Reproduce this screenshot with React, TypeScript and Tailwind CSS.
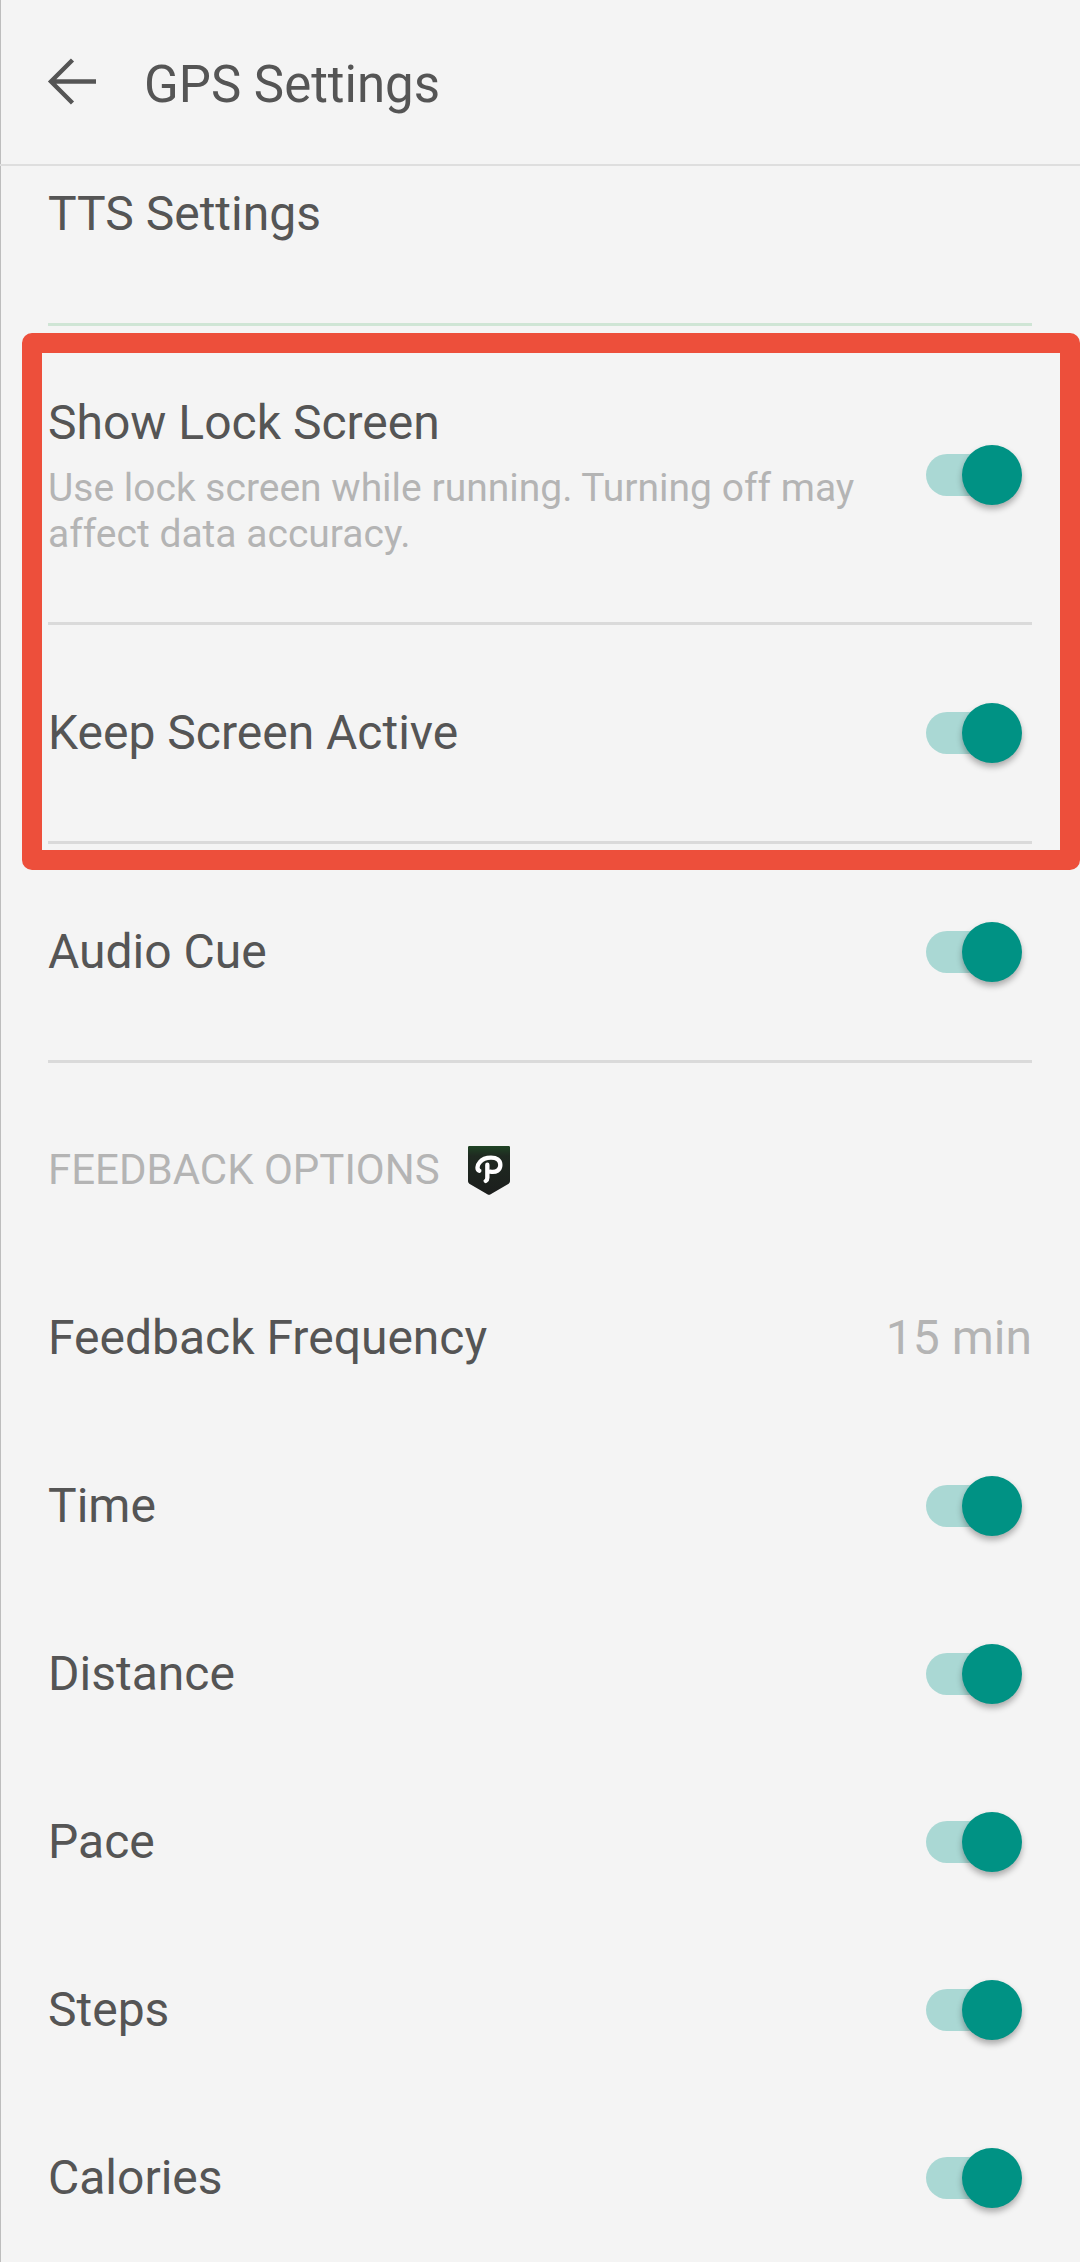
import React from 'react';

const feedbackItems = ['Time', 'Distance', 'Pace', 'Steps', 'Calories'];

const BackArrow = () => (
  <svg className="w-12 h-12 overflow-visible" viewBox="0 0 48 48" fill="none" stroke="#555" strokeWidth="4.4" aria-hidden="true">
    <path d="M48 20.5H3M24.5 -1L3 20.5L24.5 42" strokeLinejoin="miter" />
  </svg>
);

const BadgeLogo = () => (
  <svg className="w-[42px] h-[49px]" viewBox="87 78 126 147" fill="none" aria-hidden="true">
    <defs>
      <linearGradient id="badge" x1="0" y1="0" x2="0" y2="1">
        <stop offset="0" stopColor="#1f4424" />
        <stop offset="0.2" stopColor="#1f2a21" />
        <stop offset="1" stopColor="#1c1e1d" />
      </linearGradient>
    </defs>
    <path d="M91 78H209Q213 78 213 82V184Q213 188 209 191L155 223Q150 226 145 223L91 191Q87 188 87 184V82Q87 78 91 78Z" fill="url(#badge)" />
    <path
      d="M121 152C113 149 114 136 122 127C130 117 142 113 156 113C173 113 184 121 184 135C184 150 172 158 154 155M145 134V173Q145 180 140 183"
      stroke="#fff"
      strokeWidth="13"
      strokeLinecap="round"
      strokeLinejoin="round"
    />
  </svg>
);

const Toggle = ({ id }: { id: string }) => (
  <span className="relative flex items-center shrink-0 w-24 h-[60px] mr-[10px]">
    <input id={id} type="checkbox" role="switch" defaultChecked className="peer absolute inset-0 z-10 w-full h-full opacity-0 cursor-pointer" />
    <span className="w-[84px] h-[42px] rounded-full bg-gray-300 peer-checked:bg-[#aad8d4]" />
    <span className="absolute left-0 w-[60px] h-[60px] rounded-full bg-gray-50 shadow-[0_4px_6px_rgba(0,0,0,0.3)] transition-all peer-checked:left-9 peer-checked:bg-[#009284]" />
  </span>
);

type RowProps = {
  label: string;
  description?: string;
  className: string;
};

const SwitchRow = ({ label, description, className }: RowProps) => {
  const id = label.toLowerCase().replace(/ /g, '-');

  return (
    <div className={`mx-12 flex items-center justify-between gap-12 ${className}`}>
      <label htmlFor={id} className="cursor-pointer">
        <span className="block text-[48px] leading-[60px]">{label}</span>
        {description && <span className="block mt-3 text-[39px] leading-[46px] text-[#b4b4b4]">{description}</span>}
      </label>
      <Toggle id={id} />
    </div>
  );
};

const App = () => {
  return (
    <div className="min-h-screen bg-[#f4f4f4] text-[#555] font-[Roboto,sans-serif] shadow-[inset_1px_0_0_#bdbdbd]">
      <header className="flex items-center gap-12 h-[166px] px-12 pt-1.5 border-b-2 border-[#dedede]">
        <button type="button" aria-label="Back" className="cursor-pointer">
          <BackArrow />
        </button>
        <h1 className="text-[51px] leading-[60px]">GPS Settings</h1>
      </header>

      <main>
        <div className="mx-12 h-[160px] pt-[18px] border-b-3 border-[#cfe5d5]">
          <button type="button" className="block w-full text-left text-[48px] leading-[60px] cursor-pointer">
            TTS Settings
          </button>
        </div>

        {/* Highlighted settings */}
        <div className="relative">
          <SwitchRow
            label="Show Lock Screen"
            description="Use lock screen while running. Turning off may affect data accuracy."
            className="h-[299px] pt-0.5 border-b-3 border-[#dadada]"
          />
          <SwitchRow label="Keep Screen Active" className="h-[219px] border-b-3 border-[#dadada]" />
          <div className="absolute top-[7px] -bottom-[26px] left-[22px] right-0 border-20 border-[#ed4f3b] rounded-[10px] pointer-events-none" />
        </div>

        <SwitchRow label="Audio Cue" className="h-[219px] border-b-3 border-[#dadada]" />

        {/* Feedback options */}
        <section className="pt-[23px]">
          <div className="flex items-center gap-7 h-[168px] px-12">
            <h2 className="text-[42px] leading-[60px] text-[#b4b4b4]">FEEDBACK OPTIONS</h2>
            <BadgeLogo />
          </div>
          <button type="button" className="flex items-center justify-between w-full h-[168px] px-12 text-[48px] leading-[60px] cursor-pointer">
            <span>Feedback Frequency</span>
            <span className="text-[#b4b4b4]">15 min</span>
          </button>
          {feedbackItems.map((item) => (
            <SwitchRow key={item} label={item} className="h-[168px]" />
          ))}
        </section>
      </main>
    </div>
  );
};

export default App;
